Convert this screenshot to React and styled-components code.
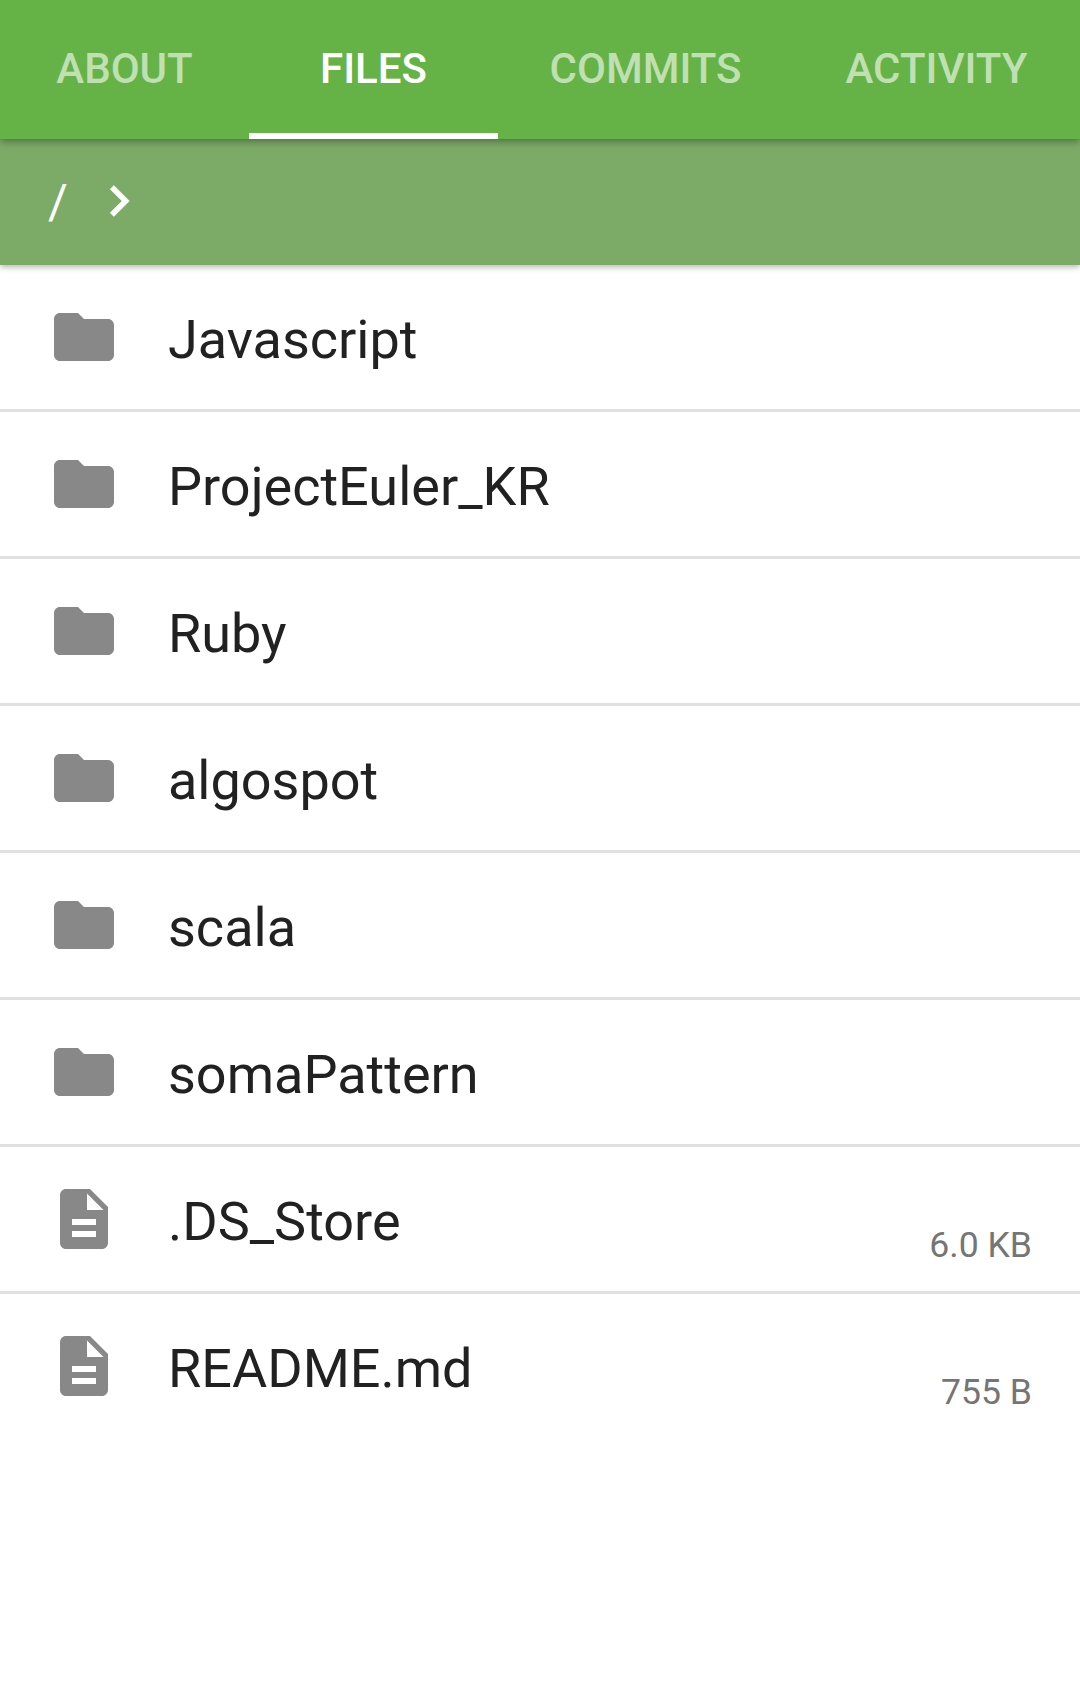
import React from "react";
import styled, { createGlobalStyle } from "styled-components";

const tabs = [
  { label: "ABOUT", width: 249 },
  { label: "FILES", width: 249, active: true },
  { label: "COMMITS", width: 295 },
  { label: "ACTIVITY", width: 287 },
];

const entries = [
  { name: "Javascript", type: "folder" },
  { name: "ProjectEuler_KR", type: "folder" },
  { name: "Ruby", type: "folder" },
  { name: "algospot", type: "folder" },
  { name: "scala", type: "folder" },
  { name: "somaPattern", type: "folder" },
  { name: ".DS_Store", type: "file", size: "6.0 KB" },
  { name: "README.md", type: "file", size: "755 B" },
];

const GlobalStyle = createGlobalStyle`
  html, body {
    margin: 0;
    padding: 0;
    background: #fff;
    font-family: Roboto, "Liberation Sans", sans-serif;
  }
`;

const Page = styled.div`
  width: 1080px;
  height: 1699px;
  overflow: hidden;
  background: #fff;
`;

const TabBar = styled.nav`
  position: relative;
  z-index: 2;
  display: flex;
  height: 139px;
  background: #65b347;
  box-shadow: 0 2px 8px rgba(0, 0, 0, 0.4);
`;

const Tab = styled.div`
  flex: none;
  box-sizing: border-box;
  width: ${(p) => p.$width}px;
  height: 139px;
  padding-top: 44px;
  text-align: center;
  font-size: 42px;
  line-height: 49px;
  font-weight: 500;
  color: ${(p) => (p.$active ? "#fff" : "rgba(255, 255, 255, 0.6)")};
  border-bottom: 6px solid ${(p) => (p.$active ? "#fff" : "transparent")};
`;

const Breadcrumb = styled.div`
  position: relative;
  z-index: 1;
  display: flex;
  align-items: center;
  height: 126px;
  padding-left: 48px;
  background: #7cab67;
  box-shadow: 0 2px 6px rgba(0, 0, 0, 0.3);
  color: #fff;
`;

const Slash = styled.span`
  font-size: 48px;
  line-height: 56px;
`;

const Chevron = styled.svg`
  width: 62px;
  height: 62px;
  margin: -3px 0 0 20px;
  fill: #fff;
  stroke: #fff;
  stroke-width: 0.2;
`;

const List = styled.ul`
  list-style: none;
  margin: 0;
  padding: 0;
`;

const Row = styled.li`
  display: flex;
  box-sizing: border-box;
  height: 147px;
  padding: 36px 48px 0;
  border-bottom: 3px solid #e0e0e0;
  &:last-child {
    border-bottom: 0;
  }
`;

const Icon = styled.svg`
  flex: none;
  width: 72px;
  height: 72px;
  fill: #888;
`;

const Name = styled.span`
  flex: 1;
  margin-left: 48px;
  margin-top: 7px;
  font-size: 54px;
  line-height: 63px;
  color: #212121;
`;

const Size = styled.span`
  margin-top: 41px;
  font-size: 35.6px;
  line-height: 42px;
  color: #757575;
`;

const FolderIcon = () => (
  <Icon viewBox="0 0 24 24">
    <path d="M10 4H4c-1.1 0-2 .9-2 2v12c0 1.1.9 2 2 2h16c1.1 0 2-.9 2-2V8c0-1.1-.9-2-2-2h-8l-2-2z" />
  </Icon>
);

const FileIcon = () => (
  <Icon viewBox="0 0 24 24">
    <path d="M14 2H6c-1.1 0-1.99.9-1.99 2L4 20c0 1.1.89 2 1.99 2H18c1.1 0 2-.9 2-2V8l-6-6zm2 16H8v-2h8v2zm0-4H8v-2h8v2zm-3-5V3.5L18.5 9H13z" />
  </Icon>
);

export default function App() {
  return (
    <Page>
      <GlobalStyle />
      <TabBar>
        {tabs.map((tab) => (
          <Tab key={tab.label} $width={tab.width} $active={tab.active}>
            {tab.label}
          </Tab>
        ))}
      </TabBar>
      <Breadcrumb>
        <Slash>/</Slash>
        <Chevron viewBox="0 0 24 24">
          <path d="M10 6L8.59 7.41 13.17 12l-4.58 4.59L10 18l6-6z" />
        </Chevron>
      </Breadcrumb>
      <List>
        {entries.map((entry) => (
          <Row key={entry.name}>
            {entry.type === "folder" ? <FolderIcon /> : <FileIcon />}
            <Name>{entry.name}</Name>
            {entry.size && <Size>{entry.size}</Size>}
          </Row>
        ))}
      </List>
    </Page>
  );
}
